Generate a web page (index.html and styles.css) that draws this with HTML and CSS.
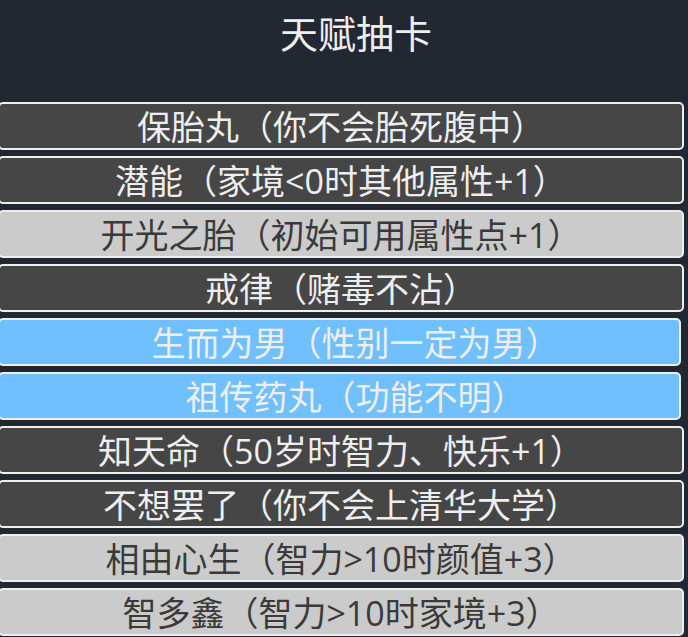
FILE: index.html
```html
<!DOCTYPE html>
<html lang="zh-CN">
<head>
    <meta charset="UTF-8">
    <meta name="viewport" content="width=device-width, initial-scale=1.0">
    <title>天赋抽卡</title>
    <link rel="stylesheet" href="styles.css">
</head>
<body>
    <div class="page">
        <h1 class="title">天赋抽卡</h1>
        <ul class="talents" id="talents">
            <li class="talent common">保胎丸（你不会胎死腹中）</li>
            <li class="talent common">潜能（家境&lt;0时其他属性+1）</li>
            <li class="talent rare">开光之胎（初始可用属性点+1）</li>
            <li class="talent common">戒律（赌毒不沾）</li>
            <li class="talent selected">生而为男（性别一定为男）</li>
            <li class="talent selected">祖传药丸（功能不明）</li>
            <li class="talent common">知天命（50岁时智力、快乐+1）</li>
            <li class="talent common">不想罢了（你不会上清华大学）</li>
            <li class="talent rare">相由心生（智力&gt;10时颜值+3）</li>
            <li class="talent rare">智多鑫（智力&gt;10时家境+3）</li>
        </ul>
    </div>
</body>
</html>
```

FILE: styles.css
```css
body {
    margin: 0;
    background-color: #222831;
    font-family: "Noto Sans CJK SC", "Noto Sans", sans-serif;
    color: #eee;
    overflow: hidden;
}

.title {
    margin: 0;
    height: 102px;
    padding-left: 24px;
    line-height: 64px;
    font-size: 38px;
    font-weight: normal;
    text-align: center;
    color: #eee;
}

.talents {
    list-style: none;
    margin: 0 4px 0 -2px;
    padding: 0;
    display: flex;
    flex-direction: column;
    gap: 6px;
}

/* latin digits in the reference are wider than the CJK font's own */
.talent {
    box-sizing: border-box;
    height: 48px;
    padding-top: 3px;
    border: 2px solid #eee;
    border-radius: 5px;
    font-family: "Open Sans", "Noto Sans CJK SC", sans-serif;
    font-size: 34px;
    line-height: 41px;
    text-align: center;
    white-space: nowrap;
}

.talent.common {
    background-color: #464646;
    color: #eee;
}

.talent.rare {
    background-color: #cbcbcb;
    color: #3a3a3a;
}

.talent.selected {
    margin-right: 3px;
    padding-left: 32px;
    background-color: #70bfff;
    color: #eee;
}
```
